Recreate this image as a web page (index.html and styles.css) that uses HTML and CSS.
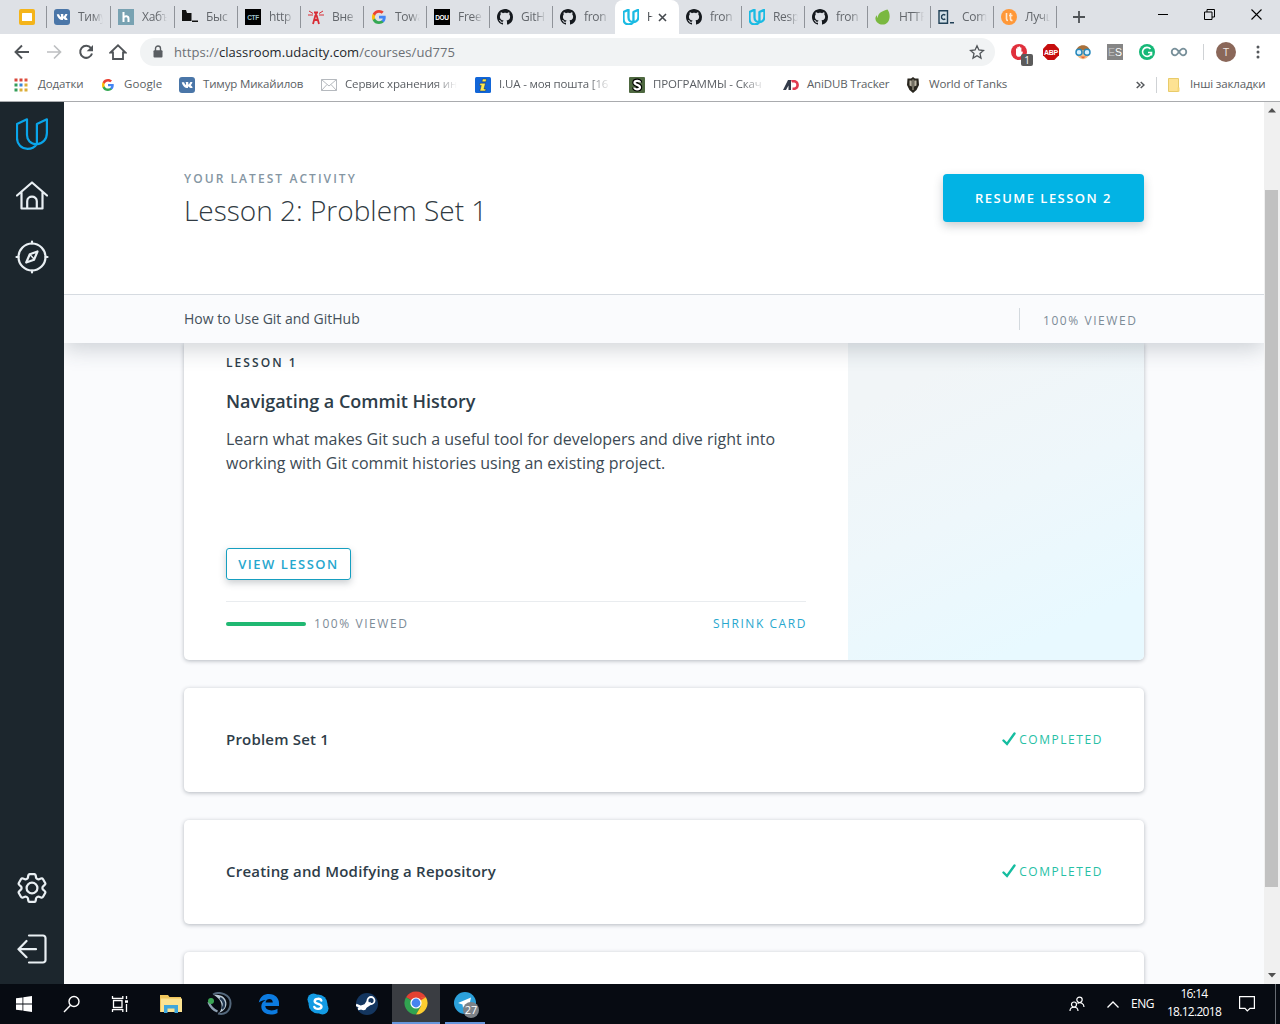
FILE: index.html
```html
<!DOCTYPE html>
<html lang="uk">
<head>
<meta charset="utf-8">
<title>How to Use Git and GitHub</title>
<link rel="stylesheet" href="styles.css">
</head>
<body>
<svg class="defs" width="0" height="0">
  <symbol id="github" viewBox="0 0 16 16"><path fill="#15191e" d="M8 0C3.58 0 0 3.58 0 8c0 3.54 2.29 6.53 5.47 7.59.4.07.55-.17.55-.38 0-.19-.01-.82-.01-1.49-2.01.37-2.53-.49-2.69-.94-.09-.23-.48-.94-.82-1.13-.28-.15-.68-.52-.01-.53.63-.01 1.08.58 1.23.82.72 1.21 1.87.87 2.33.66.07-.52.28-.87.51-1.07-1.78-.2-3.64-.89-3.64-3.95 0-.87.31-1.59.82-2.15-.08-.2-.36-1.02.08-2.12 0 0 .67-.21 2.2.82.64-.18 1.32-.27 2-.27.68 0 1.36.09 2 .27 1.53-1.04 2.2-.82 2.2-.82.44 1.1.16 1.92.08 2.12.51.56.82 1.27.82 2.15 0 3.07-1.87 3.75-3.65 3.95.29.25.54.73.54 1.48 0 1.07-.01 1.93-.01 2.2 0 .21.15.46.55.38A8.013 8.013 0 0016 8c0-4.42-3.58-8-8-8z"/></symbol>
  <symbol id="google" viewBox="0 0 18 18"><path fill="#4285f4" d="M17.64 9.2c0-.637-.057-1.251-.164-1.84H9v3.481h4.844c-.209 1.125-.843 2.078-1.796 2.717v2.258h2.908c1.702-1.567 2.684-3.874 2.684-6.615z"/><path fill="#34a853" d="M9 18c2.43 0 4.467-.806 5.956-2.18l-2.908-2.259c-.806.54-1.837.86-3.048.86-2.344 0-4.328-1.584-5.036-3.711H.957v2.332A8.997 8.997 0 009 18z"/><path fill="#fbbc05" d="M3.964 10.71A5.41 5.41 0 013.682 9c0-.593.102-1.17.282-1.71V4.958H.957A8.996 8.996 0 000 9c0 1.452.348 2.827.957 4.042l3.007-2.332z"/><path fill="#ea4335" d="M9 3.58c1.321 0 2.508.454 3.44 1.345l2.582-2.58C13.463.891 11.426 0 9 0A8.997 8.997 0 00.957 4.958L3.964 7.29C4.672 5.163 6.656 3.58 9 3.58z"/></symbol>
  <symbol id="vk" viewBox="0 0 16 16"><rect width="16" height="16" rx="3" fill="#4a76a8"/><path fill="#fff" d="M7.7 11h.9c.5-.1.4-.4.4-.8.1-.8.5-.9 1.1-.3.5.5.9 1 1.500 1.100h1.500c.6-.1.6-.5.300-.9-.4-.7-1-1.200-1.600-1.800.5-.9 1.200-1.600 1.600-2.600.1-.4-.1-.6-.5-.6h-1.400c-.3 0-.4.2-.5.4-.3.700-.7 1.400-1.200 1.900-.4.2-.5 0-.5-.4V5.500c0-.4-.1-.5-.5-.5H7c-.4 0-.5.300-.3.500.4.500.4 1.500.2 2.200-.1.200-.3.200-.5 0-.5-.6-.9-1.300-1.100-2-.1-.3-.3-.4-.6-.4H3.200c-.4 0-.5.2-.4.5C3.800 8.500 5.200 11 7.700 11Z"/></symbol>
  <symbol id="udacity" viewBox="0 0 32 32"><path d="M1 6 11 1.300V17c0 5 3.500 9.300 9.500 9.300C18.500 29.500 15 30.800 11.500 30.800 5.500 30.800 1 26.500 1 20ZM20.500 26.300c.3-1 .4-2 .4-3.300V6l10-4.700V15c0 6-4 11-10.400 11.300Z" fill="none" stroke="currentColor" stroke-linejoin="round"/></symbol>
</svg>

<div class="browser">
  <div class="tabs">
    <div class="tab pinned"><svg width="16" height="16"><rect width="16" height="16" rx="2" fill="#f4b41a"/><rect x="3" y="4" width="10" height="8" rx=".5" fill="#fff"/></svg></div>
    <div class="tab wide"><svg width="16" height="16"><use href="#vk"/></svg><span>Тиму</span></div>
    <div class="tab wide"><svg width="16" height="16"><rect width="16" height="16" fill="#78a2b2"/><path d="M5.500 3v10M5.500 8.500c1.500-2 5-1.800 5 1.200V13" fill="none" stroke="#fff" stroke-width="2"/></svg><span>Хабъ</span></div>
    <div class="tab"><svg width="16" height="16"><path fill="#111" d="M0 1h4l1 3h4.500v8H0zM10 11.500h6V13h-6z"/></svg><span>Быс</span></div>
    <div class="tab"><svg width="16" height="16"><rect width="16" height="16"/><text x="8" y="10.800" class="ic ctf">CTF</text></svg><span>http</span></div>
    <div class="tab"><svg width="16" height="16" fill="none" stroke="#d82c35"><path d="M1 2l4 2.500M15 2l-4 2.500M0 6h5M11 6h5" /><path stroke-width="1.800" d="M6 3.500h4M8 3v3M7.500 6 5 15M8.500 6 11 15M6 11h4"/></svg><span>Вне</span></div>
    <div class="tab"><svg width="14" height="14" class="gtab"><use href="#google"/></svg><span>Towa</span></div>
    <div class="tab"><svg width="16" height="16"><rect width="16" height="16"/><text x="8" y="10.800" class="ic dou">DOU</text></svg><span>Free</span></div>
    <div class="tab"><svg width="16" height="16"><use href="#github"/></svg><span>GitH</span></div>
    <div class="tab"><svg width="16" height="16"><use href="#github"/></svg><span>fron</span></div>
    <div class="tab active"><svg width="16" height="16" class="uda"><use href="#udacity"/></svg><span>H</span><svg width="9" height="9" class="close"><path d="M1 1l7 7M8 1 1 8" stroke="#45494e" stroke-width="1.600"/></svg></div>
    <div class="tab after"><svg width="16" height="16"><use href="#github"/></svg><span>fron</span></div>
    <div class="tab"><svg width="16" height="16" class="uda"><use href="#udacity"/></svg><span>Resp</span></div>
    <div class="tab"><svg width="16" height="16"><use href="#github"/></svg><span>fron</span></div>
    <div class="tab"><svg width="16" height="16"><path fill="#7ab840" d="M12.500.5c2.500 3 3 9 .5 12.500-2.500 3.500-8.500 3.300-11.300 0-2-2.700-1.500-5 .2-6.800.2 1.400.4 2 .9 2.800C3 3.500 7.500 2 12.500.5Z"/></svg><span>HTTP</span></div>
    <div class="tab"><svg width="16" height="16"><path d="M1 1.700h8.500v12.600H1z" fill="#d3e0e8" stroke="#204056" stroke-width="1.400"/><path d="M7.300 6.200C5.500 4.800 3.500 6 3.500 8s2 3.200 3.800 1.900M12 13.700h4" fill="none" stroke="#204056" stroke-width="1.400"/></svg><span>Com</span></div>
    <div class="tab"><svg width="16" height="16"><circle cx="8" cy="8" r="8" fill="#ff9838"/><path d="M5.500 4v6c0 1 .5 1.500 1.500 1.500M9.500 4v6c0 1 .5 1.500 2 1.500M8 6.500h3.500" fill="none" stroke="#ffe9d2" stroke-width="1.600"/></svg><span>Лучш</span></div>
    <div class="tab newtab"><svg width="12" height="12"><path d="M6 0v12M0 6h12" stroke="#4e5256" stroke-width="1.800"/></svg></div>
    <div class="winbtns">
      <svg width="10" height="11"><path d="M0 5.500h10" stroke="#000"/></svg>
      <svg width="11" height="11" fill="none" stroke="#000"><path d="M.5 3h7.500v7.500H.5zM3 3V.5h7.500V8H8"/></svg>
      <svg width="11" height="11"><path d="M.5.5l10 10M10.500.5l-10 10" stroke="#000" stroke-width="1.100"/></svg>
    </div>
  </div>

  <div class="toolbar">
    <div class="slot"><svg width="16" height="16" fill="none" stroke="#505458" stroke-width="1.900"><path d="M15 8H2M8 1.500 1.500 8 8 14.500"/></svg></div>
    <div class="slot"><svg width="16" height="16" fill="none" stroke="#bdbfc1" stroke-width="1.700"><path d="M1 8h13M8 1.500 14.500 8 8 14.500"/></svg></div>
    <div class="slot"><svg width="16" height="16"><path d="M13 4.200A6 6 0 1 0 14 9.500" fill="none" stroke="#505458" stroke-width="2"/><path d="M15 1v6.300H8.700z" fill="#505458"/></svg></div>
    <div class="slot"><svg width="18" height="16" fill="none" stroke="#505458" stroke-width="1.800"><path d="M1.500 8.500 9 1.300l7.500 7.200H14V15H4V8.500z"/></svg></div>
    <div class="omnibox">
      <svg width="10" height="14"><path d="M2.500 6V3.500a2.500 2.500 0 0 1 5 0V6" fill="none" stroke="#5a5e62" stroke-width="1.400"/><rect x=".5" y="5.200" width="9" height="7.300" rx="1" fill="#5a5e62"/></svg>
      <p class="url">https://<b>classroom.udacity.com</b>/courses/ud775</p>
      <svg width="16" height="16" class="star"><path d="m8 1.800 1.900 4.200 4.600.5-3.500 3.100 1 4.500L8 11.800l-4 2.300 1-4.500L1.500 6.500 6.100 6z" fill="none" stroke="#505458" stroke-width="1.300"/></svg>
    </div>
    <div class="slot badge-host"><svg width="16" height="16"><circle cx="8" cy="8" r="8" fill="#e0303c"/><path d="M5 5c0-1 1-1 1.200 0V3.500c.3-1 1.300-1 1.400 0V3c.3-.9 1.300-.9 1.400 0v.7c.3-.8 1.300-.7 1.400.2V8c.4-.8 1.600-.6 1.400.3-.6 2.200-1.500 4.500-3.500 4.500S5 12 5 10z" fill="#fff"/></svg><i class="badge">1</i></div>
    <div class="slot"><svg width="16" height="16"><path fill="#c60d0d" d="M4.700 0h6.600L16 4.700v6.600L11.300 16H4.700L0 11.300V4.700z"/><text x="8" y="10.700" class="ic abp">ABP</text></svg></div>
    <div class="slot"><svg width="16" height="16"><path d="M1 8c0-9 14-9 14 0l-1 4H2z" fill="#a9713c"/><path d="M2 6h12v5c-2 5.500-10 5.500-12 0z" fill="#eec08c"/><path d="M5 12.500h6L8 14.500z" fill="#e86435"/><g fill="#d8f2ff" stroke="#2789bd" stroke-width="1.500"><circle cx="4" cy="8.300" r="3"/><circle cx="12" cy="8.300" r="3"/></g></svg></div>
    <div class="slot"><svg width="16" height="16"><rect width="16" height="16" fill="#858585"/><text x="8" y="12" class="ic es"><tspan fill="#bbb">E</tspan>S</text></svg></div>
    <div class="slot"><svg width="16" height="16"><circle cx="8" cy="8" r="8" fill="#15b877"/><path d="M11.500 5a4.500 4.500 0 1 0 1 3.500H9M12.500 8v3.500" fill="none" stroke="#fff" stroke-width="1.600"/></svg></div>
    <div class="slot"><svg width="18" height="12"><path d="M9 6C7 3.200 6.200 2.700 5 2.700a3.300 3.300 0 0 0 0 6.600C6.200 9.300 7 8.800 9 6s2.800-3.300 4-3.300a3.300 3.300 0 0 1 0 6.600C11.800 9.300 11 8.800 9 6z" fill="none" stroke="#78909a" stroke-width="1.800"/></svg></div>
    <div class="vsep"></div>
    <div class="avatar">T</div>
    <div class="menu"><svg width="4" height="14" fill="#55585c"><circle cx="2" cy="2" r="1.500"/><circle cx="2" cy="7" r="1.500"/><circle cx="2" cy="12" r="1.500"/></svg></div>
  </div>

  <div class="bookmarks">
    <div class="bm"><svg width="16" height="16"><path d="M1.500 1.500h3v3h-3zM6.500 1.500h3v3h-3z" fill="#d8473b"/><path d="M11.500 1.500h3v3h-3z" fill="#e0503f"/><path d="M6.500 6.500h3v3h-3z" fill="#3b85d8"/><path d="M11.500 6.500h3v3h-3zM11.500 11.500h3v3h-3zM6.500 11.500h3v3h-3z" fill="#dcae39"/><path d="M1.500 6.500h3v3h-3zM1.500 11.500h3v3h-3z" fill="#349d5b"/></svg><span class="apps">Додатки</span></div>
    <div class="bm"><svg width="12" height="12" class="gbm"><use href="#google"/></svg><span class="loose">Google</span></div>
    <div class="bm"><svg width="16" height="16"><use href="#vk"/></svg><span>Тимур Микайилов</span></div>
    <div class="bm"><svg width="16" height="16" fill="none" stroke="#b5b9be"><path d="M.5 2.500h15v11H.5zM.5 2.500 8 9l7.500-6.500M.5 13.500l5.500-6M15.500 13.500l-5.500-6"/></svg><span class="fade">Сервис хранения ин</span></div>
    <div class="bm"><svg width="16" height="16"><rect width="16" height="16" rx="1.500" fill="#1266d8"/><path d="M7.500 2h4L11 4.800H7zM5 6.200h5.500L9 12h2l-.5 2H4.800l1.400-5.600H4.500z" fill="#ffe94a" stroke="#12306b" stroke-width=".5"/></svg><span class="fade">I.UA - моя пошта [16</span></div>
    <div class="bm"><svg width="16" height="16"><rect width="16" height="16" rx="1" fill="#4e6840"/><path d="M11 5.500C11 3.200 5.500 3.200 5.500 5.700 5.500 8.300 11 7.500 11 10.300c0 2.700-5.700 2.700-5.700.2" fill="none" stroke="#000" stroke-width="4.400"/><path d="M11 5.500C11 3.200 5.500 3.200 5.500 5.700 5.500 8.300 11 7.500 11 10.300c0 2.700-5.700 2.700-5.700.2" fill="none" stroke="#fff" stroke-width="2.200"/></svg><span class="fade">ПРОГРАММЫ - Скач</span></div>
    <div class="bm"><svg width="16" height="16"><path d="M0 13 5 3h3v10H5.500V8.500L3 13z" fill="#333b4a"/><path d="M8 3h3c6.500 0 6.500 10 0 10H9.500v-2.500H11c3 0 3-5 0-5H9z" fill="#e13c50"/></svg><span>AniDUB Tracker</span></div>
    <div class="bm"><svg width="16" height="16"><path d="M8 0l2 1.500h3.500L14 8l-2.500 5L8 16l-3.500-3L2 8l.5-6.500H6z" fill="#29261f"/><path d="M6.700 3.500H4.500v5l2.200 1zM9.300 3.500h2.200v5l-2.200 1zM7.500 2.500h1V13h-1z" fill="#bdb7a6"/></svg><span>World of Tanks</span></div>
    <div class="more"><svg width="9" height="8" fill="none" stroke="#55585c" stroke-width="1.500"><path d="M.7 1 4 4 .7 7M4.700 1 8 4 4.700 7"/></svg></div>
    <div class="vsep"></div>
    <div class="folder"><svg width="12" height="14"><path d="M.5.5h10v13H.5z" fill="#fde293" stroke="#e8cb6a"/><path d="M9.500 9.500h2v4h-2z" fill="#f6d776"/></svg><span>Інші закладки</span></div>
  </div>
</div>

<div class="app">
  <nav class="sidebar">
    <div class="group">
      <a class="logo"><svg width="32" height="32"><use href="#udacity"/></svg></a>
      <a><svg width="32" height="30"><path d="M1 14.500 16 1.500l15 13M5.500 11v16.500h21V11M11.200 27.500V20.200c0-6 9.600-6 9.600 0v7.300"/></svg></a>
      <a><svg width="34" height="34"><circle cx="17" cy="17" r="13.500"/><path d="M17 1.500v2M17 30.500v2M1.500 17h2M30.500 17h2M22.500 11.500l-3.500 8.300-7.800 2.700 3.600-8.300z"/><path d="m15 14.500 4 4.500" stroke-width="1.500"/></svg></a>
    </div>
    <div class="group">
      <a><svg width="30" height="30" viewBox="2.300 2.300 19.400 19.400" class="gear"><path d="M9.594 3.940c.09-.542.56-.94 1.110-.94h2.593c.55 0 1.020.398 1.110.94l.213 1.281c.063.374.313.686.645.87.074.04.147.083.22.127.325.196.72.257 1.075.124l1.217-.456a1.125 1.125 0 0 1 1.370.49l1.296 2.247a1.125 1.125 0 0 1-.26 1.431l-1.003.827c-.293.241-.438.613-.43.992a7.723 7.723 0 0 1 0 .255c-.008.378.137.75.43.991l1.004.827c.424.35.534.955.26 1.430l-1.298 2.247a1.125 1.125 0 0 1-1.369.491l-1.217-.456c-.355-.133-.75-.072-1.076.124a6.470 6.470 0 0 1-.22.128c-.331.183-.581.495-.644.869l-.213 1.281c-.09.543-.56.94-1.110.94h-2.594c-.55 0-1.019-.398-1.110-.94l-.213-1.281c-.062-.374-.312-.686-.644-.87a6.520 6.520 0 0 1-.22-.127c-.325-.196-.72-.257-1.076-.124l-1.217.456a1.125 1.125 0 0 1-1.369-.49l-1.297-2.247a1.125 1.125 0 0 1 .26-1.431l1.004-.827c.292-.24.437-.613.43-.991a6.932 6.932 0 0 1 0-.255c.007-.38-.138-.751-.43-.992l-1.004-.827a1.125 1.125 0 0 1-.26-1.430l1.297-2.247a1.125 1.125 0 0 1 1.370-.491l1.216.456c.356.133.751.072 1.076-.124.072-.044.146-.086.22-.128.332-.183.582-.495.644-.869l.214-1.280Z"/><circle cx="12" cy="12" r="3.500"/></svg></a>
      <a><svg width="30" height="30"><path d="M12 1.500h14a2.500 2.500 0 0 1 2.500 2.500v22a2.500 2.500 0 0 1-2.500 2.500H12M19 15.200H1.500M9.500 7 1.500 15.200l8 8"/></svg></a>
    </div>
  </nav>

  <main class="page">
    <header class="hero">
      <div class="container">
        <div>
          <p class="eyebrow">YOUR LATEST ACTIVITY</p>
          <h1>Lesson 2: Problem Set 1</h1>
        </div>
        <a class="btn-primary">RESUME LESSON 2</a>
      </div>
    </header>
    <div class="subbar">
      <div class="container">
        <span class="course">How to Use Git and GitHub</span>
        <span class="viewed">100% VIEWED</span>
      </div>
    </div>
    <div class="cards">
      <section class="card lesson">
        <div class="body">
          <p class="num">LESSON 1</p>
          <h2>Navigating a Commit History</h2>
          <p class="desc">Learn what makes Git such a useful tool for developers and dive right into working with Git commit histories using an existing project.</p>
          <a class="btn-outline">VIEW LESSON</a>
          <div class="foot">
            <span class="bar"></span><span class="pct">100% VIEWED</span><a>SHRINK CARD</a>
          </div>
        </div>
        <div class="art"></div>
      </section>
      <section class="card row"><h3>Problem Set 1</h3><span class="done"><svg width="14" height="14"><path d="M1.500 8.500 5 12l7.500-10.500"/></svg>COMPLETED</span></section>
      <section class="card row"><h3>Creating and Modifying a Repository</h3><span class="done"><svg width="14" height="14"><path d="M1.500 8.500 5 12l7.500-10.500"/></svg>COMPLETED</span></section>
      <section class="card row"></section>
    </div>
  </main>

  <div class="scrollbar">
    <svg width="8" height="5"><path d="M4 0l4 4.500H0z" fill="#505050"/></svg>
    <div class="thumb"></div>
    <svg width="8" height="5"><path d="M4 4.500 0 0h8z" fill="#505050"/></svg>
  </div>
</div>

<footer class="taskbar">
  <div class="task"><svg width="16" height="16" fill="#fff"><path d="M0 2.300 6.500 1.400v6.200H0zM7.300 1.300 16 0v7.600H7.300zM0 8.400h6.500v6.200L0 13.700zM7.300 8.400H16V16l-8.700-1.300z"/></svg></div>
  <div class="task"><svg width="18" height="18" fill="none" stroke="#fff" stroke-width="1.400"><circle cx="11" cy="6.500" r="5"/><path d="M7.500 10.200 1 17"/></svg></div>
  <div class="task"><svg width="18" height="16" fill="none" stroke="#fff" stroke-width="1.300"><path d="M2.500 4.500h8.500v7H2.500zM1.500 0v2.300h10.300V0M1.500 16v-2.300h10.300V16M15.500 0v3M15.500 8v8"/><path d="M14 4.300h3v2.500h-3z" fill="#fff" stroke="none"/></svg></div>
  <div class="apps-open">
    <div class="task"><svg width="22" height="20"><path d="M0 1h8l1.500 2H21v15H0z" fill="#f0c65c"/><path d="M1 4.500h21V18H1z" fill="#fce391"/><path d="M4 19v-8h14v8h-3.500v-4.500h-7V19z" fill="#3fa7dc"/></svg></div>
    <div class="task"><svg width="26" height="24"><path d="M6 2.500C12-1 24 2 23.500 12 23 20 17 23 11 21.500" fill="none" stroke="#54687c" stroke-width="2"/><path d="M7 3c14-2 17 14 5 18 5-6 3-13-5-18z" fill="#b9c8d4"/><path d="M13 6c5 3 5 8 2 11" stroke="#223750" stroke-width="2.400" fill="none"/><path d="M1.500 10c2 5 5 8 9 9.500" stroke="#8fa1b3" stroke-width="2.400" fill="none"/><circle cx="4" cy="9" r="3" fill="#3ca655"/></svg></div>
    <div class="task"><svg width="22" height="22"><path d="M.8 9.500C2 3.500 6 1 11 1c6.500 0 10 4.500 10 9v3H7.300c.3 4.500 7.200 5.800 12.200 2.700v4.200C12.500 23.300 3.300 21 3.300 13.500 3.300 10.500 5 8.300 7.800 7 5 7.300 2.800 7.800.8 9.500ZM7.500 9.500h7.300c0-4.600-6.600-4.600-7.300 0Z" fill="#0c7be0" fill-rule="evenodd"/></svg></div>
    <div class="task"><svg width="22" height="22"><circle cx="11" cy="11" r="9.500" fill="#139be3"/><circle cx="6.500" cy="6.500" r="6" fill="#139be3"/><circle cx="15.500" cy="15.500" r="6" fill="#139be3"/><path d="M14.300 7.500C13.500 5 7.500 5.300 7.700 8.300c.2 3 6.800 2 6.800 5.200 0 3-6 3.300-7.200.4" fill="none" stroke="#fff" stroke-width="2.400" stroke-linecap="round"/></svg></div>
    <div class="task"><svg width="22" height="22"><circle cx="11" cy="11" r="11" fill="#14365f"/><path d="M0 12l5.500 2.200L9.500 12l3-4.500M2 16l4-1" stroke="#fff" stroke-width="2.500" fill="none"/><circle cx="15" cy="7.500" r="3.500" fill="#14365f" stroke="#fff" stroke-width="1.800"/><circle cx="7.500" cy="14.500" r="2.800" fill="#fff"/><path d="m9 14 6-4" stroke="#fff" stroke-width="3"/></svg></div>
    <div class="task chrome"><svg width="24" height="24" viewBox="0 0 24 24"><path d="M12 12 2.040 6.250A11.500 11.500 0 0 1 21.960 6.250z" fill="#e34133"/><path d="M2.040 6.250A11.500 11.500 0 0 0 12 23.500L17 14.900 12 12z" fill="#31a350"/><path d="M21.960 6.250A11.500 11.500 0 0 1 12 23.500L17 14.900 17 6.250z" fill="#fccd2f"/><path d="M12 6.250h9.960L12 12z" fill="#e34133"/><circle cx="12" cy="12" r="5.600" fill="#fff"/><circle cx="12" cy="12" r="4.400" fill="#4684ee"/></svg></div>
    <div class="task tg"><svg width="22" height="22"><circle cx="11" cy="11" r="11" fill="#2ca1db"/><path d="m4 11 13-5.500L14.500 17l-4-3-1.500 2-.5-3.500z" fill="#fff"/></svg><i class="count">27</i></div>
  </div>
  <div class="tray">
    <svg class="people" width="16" height="16" fill="none" stroke="#fff" stroke-width="1.200"><circle cx="10.500" cy="3.800" r="2.700"/><circle cx="5" cy="8.500" r="2.500"/><path d="M1 15c0-5 8-5 8 0M8.500 7.500c3-2 6.500 0 6.500 3.500"/></svg>
    <svg class="up" width="12" height="7"><path d="M.5 6.500 6 1l5.500 5.500" fill="none" stroke="#fff" stroke-width="1.300"/></svg>
    <span class="lang">ENG</span>
    <div class="clock"><span>16:14</span><span>18.12.2018</span></div>
    <svg class="note" width="16" height="16"><path d="M.6.600h14.800v11.800h-4.400L8.300 15 6 12.400H.6z" fill="none" stroke="#fff" stroke-width="1.200"/></svg>
  </div>
</footer>
</body>
</html>
```

FILE: styles.css
```css
* { box-sizing: border-box; }
body { margin: 0; width: 1280px; height: 1024px; overflow: hidden; display: flex; flex-direction: column; font-family: "Open Sans", "Noto Sans", sans-serif; background: #fff; }
p, h1, h2, h3 { margin: 0; }
svg { display: block; flex: none; }
i { font-style: normal; }
.defs { position: absolute; }

/* Browser window */
.browser { height: 102px; border-bottom: 1px solid #a9abae; flex: none; }
.tabs { height: 34px; background: #dee1e6; display: flex; }
.tab { width: 63px; flex: none; display: flex; align-items: center; gap: 8px; padding-left: 7px; border-left: 1px solid transparent; border-image: linear-gradient(transparent 7px, #8f9399 7px 27px, transparent 27px) 1; font-size: 12px; letter-spacing: -.3px; color: #63676c; }
.tab span { width: 25px; overflow: hidden; white-space: nowrap; padding-bottom: 2px; -webkit-mask-image: linear-gradient(90deg, #000 60%, transparent); mask-image: linear-gradient(90deg, #000 60%, transparent); }
.tab.wide { width: 64px; }
.tab.pinned { width: 46px; padding-left: 18px; border-image: none; }
.tab.active { background: #fff; border-image: none; border-radius: 8px 8px 0 0; width: 64px; color: #45494e; }
.tab.active span { width: 6px; }
.tab.active .close { margin-left: -3px; }
.tab.after { width: 62px; border-image: none; padding-left: 6px; }
.tab.newtab { padding-left: 16px; }
.gtab { margin: 0 1px; }
.uda { color: #1abbe3; stroke-width: 4.600; }
.ic { font-family: "Liberation Sans", sans-serif; font-weight: 700; fill: #fff; text-anchor: middle; }
.ctf { font-size: 6.500px; fill: #9bc0c8; }
.dou { font-size: 6.500px; }
.abp { font-size: 7px; letter-spacing: -.3px; }
.es { font-size: 10.500px; font-weight: 400; }
.winbtns { display: flex; margin-left: auto; gap: 36px; padding: 9px 18px 0 0; }

.toolbar { height: 36px; display: flex; align-items: center; padding-left: 6px; }
.slot { width: 32px; display: flex; justify-content: center; }
.omnibox { width: 855px; height: 28px; margin: 0 8px 0 6px; border-radius: 14px; background: #f1f3f4; display: flex; align-items: center; padding: 0 10px 0 13px; }
.url { margin-left: 11px; font-size: 13px; letter-spacing: .07px; color: #6c7075; }
.url b { font-weight: 400; color: #25282c; }
.star { margin-left: auto; }
.badge-host { position: relative; }
.badge { position: absolute; left: 18px; top: 10px; width: 12px; height: 12px; border-radius: 2px; background: #5b5b5b; color: #fff; font-size: 10px; line-height: 12px; text-align: center; }
.vsep { width: 1px; height: 16px; background: #cfd2d5; flex: none; }
.toolbar .vsep { margin: 0 12px 0 8px; }
.avatar { width: 20px; height: 20px; border-radius: 50%; background: #8a6759; color: #f0e8e4; font-size: 11px; line-height: 20px; text-align: center; }
.menu { margin-left: 20px; }

.bookmarks { height: 29px; display: grid; grid-template-columns: 87px 79px 142px 154px 154px 154px 122px 231px 20px 12px 99px; padding-left: 13px; align-items: center; font-size: 11.500px; color: #5a5e63; letter-spacing: -.15px; white-space: nowrap; }
.bm { display: flex; align-items: center; gap: 8px; }
.bm span, .folder span { padding-bottom: 2px; }
.bm .apps { margin-left: 1px; }
.bm .loose { letter-spacing: .1px; }
.bm .fade { width: 112px; overflow: hidden; -webkit-mask-image: linear-gradient(90deg, #000 80%, transparent); mask-image: linear-gradient(90deg, #000 80%, transparent); }
.gbm { margin: 0 2px; }
.folder { display: flex; align-items: center; gap: 10px; }

/* Classroom */
.app { height: 882px; display: flex; flex: none; }
.sidebar { width: 64px; background: #1c262d; display: flex; flex-direction: column; justify-content: space-between; padding: 2px 0 5px; }
.sidebar a { height: 61px; display: flex; align-items: center; justify-content: center; color: #e9eff3; }
.sidebar a svg { fill: none; stroke: currentColor; stroke-width: 2.200; stroke-linecap: round; stroke-linejoin: round; }
.sidebar a.logo { color: #0aa5ea; padding: 0 1px 1px 0; }
.sidebar a.logo svg { stroke-width: 2.200; }
.sidebar a .gear { stroke-width: 1.450; }
.page { width: 1200px; display: flex; flex-direction: column; background: #fafbfd; overflow: hidden; }
.container { width: 960px; margin: 0 auto; display: flex; align-items: center; justify-content: space-between; }
.hero { height: 193px; flex: none; background: #fff; border-bottom: 1px solid #d6dbe1; display: flex; z-index: 2; }
.eyebrow { font-size: 12px; line-height: 18px; margin-top: 3px; font-weight: 600; letter-spacing: 2.060px; color: #8596a3; }
h1 { font-size: 28px; line-height: 38px; margin-top: 3px; font-weight: 300; color: #303a42; }
.btn-primary { width: 201px; height: 48px; border-radius: 4px; background: #02b3e4; color: #fff; font-size: 13px; font-weight: 600; letter-spacing: 1.480px; line-height: 48px; padding-left: 32px; white-space: nowrap; box-shadow: 0 4px 10px rgba(46, 61, 73, .25); }
.subbar { height: 48px; flex: none; background: #fafbfd; display: flex; z-index: 1; box-shadow: 0 6px 22px rgba(46, 61, 73, .22); }
.course { font-size: 14px; color: #44505a; padding-bottom: 2px; }
.viewed { width: 125px; height: 22px; border-left: 1px solid #d3d9de; padding: 3px 0 0 23px; font-size: 12px; font-weight: 500; line-height: 20px; color: #7d8b97; letter-spacing: 1.560px; white-space: nowrap; }
.cards { width: 960px; margin: 0 auto; display: flex; flex-direction: column; gap: 28px; flex: none; }
.card { background: #fff; border-radius: 5px; box-shadow: 0 1px 4px rgba(30, 45, 60, .32); overflow: hidden; flex: none; }
.lesson { height: 317px; display: flex; border-radius: 0 0 5px 5px; }
.body { width: 664px; padding: 11px 42px 0; color: #2e3d49; }
.num { font-size: 12px; line-height: 18px; font-weight: 600; letter-spacing: 2.060px; }
h2 { font-size: 18px; line-height: 26px; font-weight: 600; margin-top: 16px; }
.desc { font-size: 16px; line-height: 24px; color: #3d4a54; margin-top: 13px; width: 580px; }
.btn-outline { display: block; width: 125px; height: 32px; margin-top: 73px; border: 1px solid #169fc0; border-radius: 3px; font-size: 13px; font-weight: 600; line-height: 31px; letter-spacing: 1.500px; color: #27a7ce; text-align: center; white-space: nowrap; box-shadow: 0 3px 7px rgba(46, 61, 73, .25); }
.foot { margin-top: 21px; border-top: 1px solid #e9ecef; height: 45px; display: flex; align-items: center; font-size: 12px; font-weight: 500; letter-spacing: 1.560px; color: #7d8b97; }
.bar { width: 80px; height: 4px; border-radius: 2px; background: #20b872; margin-right: 8px; }
.pct, .foot a { padding-bottom: 2px; }
.foot a { margin-left: auto; color: #27a7ce; margin-right: -1px; }
.art { flex: 1; background: linear-gradient(155deg, #f1f5f7 15%, #eef7fb 50%, #e8f9ff 85%); }
.row { height: 104px; padding: 0 42px 2px; display: flex; align-items: center; justify-content: space-between; }
h3 { font-size: 15px; font-weight: 600; letter-spacing: .2px; color: #2e3d49; }
.done { display: flex; align-items: center; gap: 3px; font-size: 12px; font-weight: 500; letter-spacing: 1.560px; color: #26bfa5; margin-right: -1px; }
.done svg { fill: none; stroke: #15bda0; stroke-width: 2.400; stroke-linecap: round; }
.scrollbar { width: 16px; background: #f0f0f0; display: flex; flex-direction: column; align-items: center; padding: 6px 1px 6px 0; }
.thumb { width: 13px; height: 697px; background: #c1c1c1; margin: 77px 0 auto; flex: none; }

/* Taskbar */
.taskbar { height: 40px; flex: none; background: #070b12; display: flex; color: #fff; }
.task { width: 48px; display: flex; align-items: center; justify-content: center; }
.apps-open { display: flex; padding-left: 2px; }
.apps-open .task { width: 49px; }
.apps-open .task.chrome { width: 48px; margin-left: 1px; background: #3a3d42; border-bottom: 2px solid #6796dc; }
.apps-open .task.tg { width: 40px; margin-left: 5px; position: relative; border-bottom: 2px solid #6796dc; }
.count { position: absolute; left: 18px; top: 18px; width: 16px; height: 16px; border-radius: 50%; background: #7d8287; font-size: 11px; line-height: 16px; text-align: center; }
.tray { margin-left: auto; display: flex; align-items: center; width: 211px; border-right: 1px solid #666b72; margin-right: 4px; font-size: 12px; }
.people { margin-left: 4px; }
.up { margin-left: 22px; }
.lang { margin-left: 12px; letter-spacing: -.5px; width: 24px; padding-bottom: 1px; }
.clock { width: 56px; margin-left: 11px; display: flex; flex-direction: column; align-items: center; font-size: 12px; line-height: 18px; letter-spacing: -.7px; padding-bottom: 2px; }
.note { margin-left: 17px; }
```
